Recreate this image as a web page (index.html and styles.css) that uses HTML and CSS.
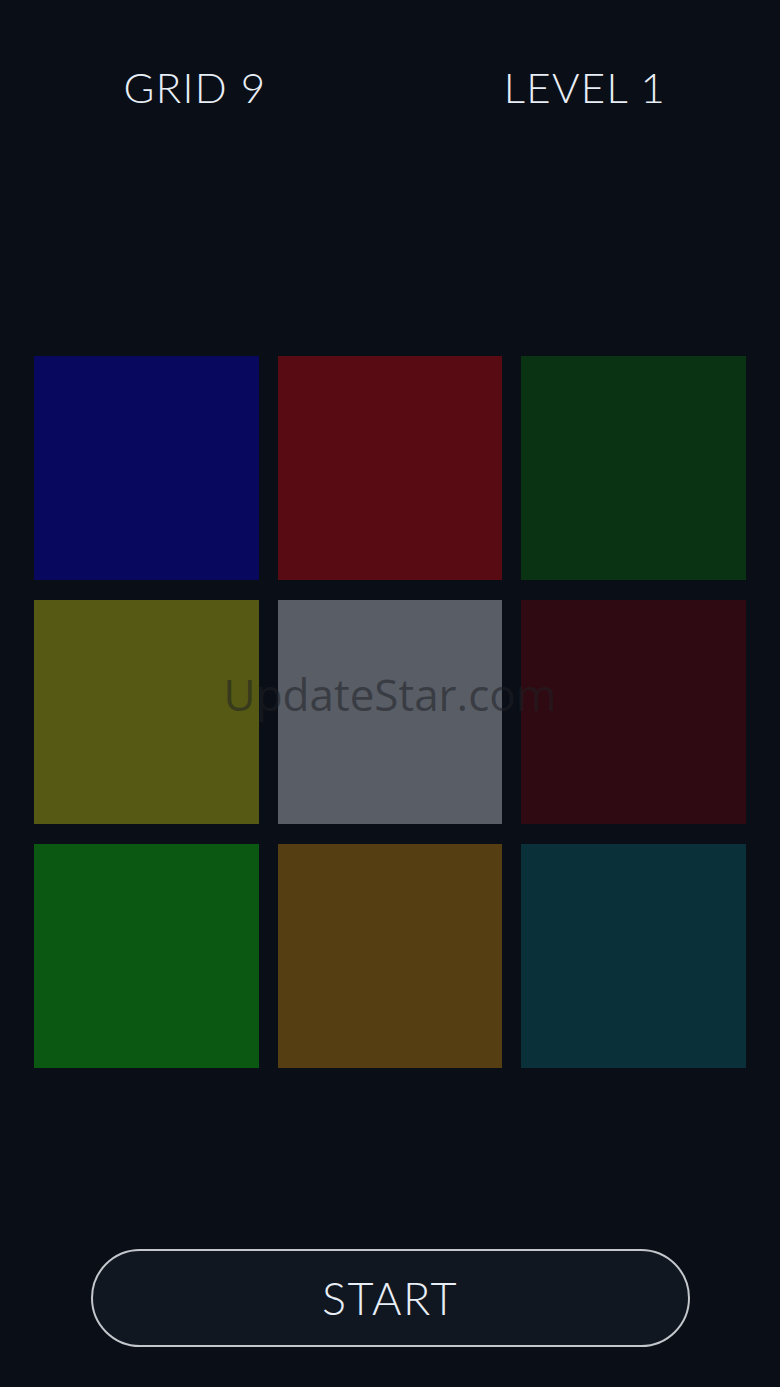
FILE: index.html
```html
<!DOCTYPE html>
<html>
<head>
<meta charset="utf-8">
<link rel="stylesheet" href="styles.css">
</head>
<body>
<div class="screen">
  <header class="header">
    <div class="stat">GRID 9</div>
    <div class="stat">LEVEL 1</div>
  </header>
  <main class="board">
    <div class="tile blue"></div>
    <div class="tile red"></div>
    <div class="tile green"></div>
    <div class="tile olive"></div>
    <div class="tile gray"></div>
    <div class="tile maroon"></div>
    <div class="tile lime"></div>
    <div class="tile brown"></div>
    <div class="tile teal"></div>
    <div class="watermark">UpdateStar.com</div>
  </main>
  <div class="actions">
    <button class="start">START</button>
  </div>
</div>
</body>
</html>
```
FILE: styles.css
```css
html, body {
  margin: 0;
  padding: 0;
  background: #0a0e16;
}
.screen {
  width: 780px;
  height: 1387px;
  display: flex;
  flex-direction: column;
  font-family: "Lato", "Noto Sans", sans-serif;
  color: #e8eef6;
}
.header {
  display: grid;
  grid-template-columns: 1fr 1fr;
  padding-top: 66px;
}
.stat {
  text-align: center;
  font-size: 42px;
  line-height: 42px;
  font-weight: 300;
  letter-spacing: 1.3px;
}
.board {
  position: relative;
  margin: 248px 34px 0 34px;
  display: grid;
  grid-template-columns: repeat(3, 1fr);
  column-gap: 19px;
  row-gap: 20px;
}
.tile {
  height: 224px;
}
.blue { background: #07085e; }
.red { background: #590b13; }
.green { background: #0a3313; }
.olive { background: #555913; }
.gray { background: #585d66; }
.maroon { background: #300a12; }
.lime { background: #0b5813; }
.brown { background: #553e12; }
.teal { background: #0a313a; }
.watermark {
  position: absolute;
  left: 0;
  right: 0;
  top: 308px;
  text-align: center;
  font-family: "Open Sans", "Noto Sans", sans-serif;
  font-size: 44px;
  color: rgba(30, 32, 36, 0.55);
  pointer-events: none;
}
.actions {
  display: flex;
  justify-content: center;
  margin-top: 181px;
}
.start {
  width: 599px;
  height: 98px;
  border-radius: 49px;
  border: 2px solid #c3c7cc;
  background: #111721;
  color: #e8eef6;
  font-family: "Lato", "Noto Sans", sans-serif;
  font-size: 45px;
  font-weight: 300;
  letter-spacing: 1.5px;
  padding: 0;
}
```
